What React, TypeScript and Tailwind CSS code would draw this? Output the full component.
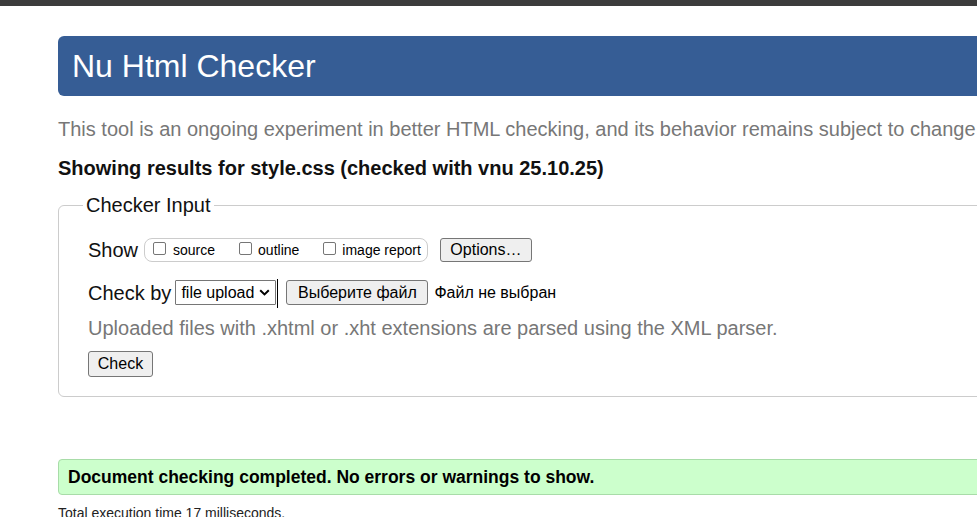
export default function App() {
  return (
    <div className="w-[977px] h-[517px] overflow-hidden bg-white font-['Liberation_Sans',Arial,sans-serif] text-[#111]">
      <div className="h-[6px] bg-[#3c3c3c]" />
      <div className="w-[1200px] pl-[58px]">
        {/* header */}
        <div className="mt-[30px] h-[60px] bg-[#365d95] rounded-[6px] flex items-center pl-[14px]">
          <h1 className="text-[32px] leading-[36px] text-white">Nu Html Checker</h1>
        </div>

        <p className="mt-[21px] text-[20px] leading-[24px] text-[#777] whitespace-nowrap">
          This tool is an ongoing experiment in better HTML checking, and its behavior remains subject to change
        </p>
        <p className="mt-[15px] text-[20px] leading-[24px] font-bold whitespace-nowrap">
          Showing results for style.css (checked with vnu 25.10.25)
        </p>

        {/* Checker Input */}
        <fieldset className="mt-[13px] border border-[#ccc] rounded-[6px] pl-[24px] pb-[19px]">
          <legend className="px-[3px] text-[20px] leading-[24px]">Checker Input</legend>
          <div className="ml-[5px]">
            <div className="mt-[20px] h-[26px] flex items-center">
              <span className="text-[20px] leading-[24px]">Show</span>
              <div className="ml-[6px] h-[24px] border border-[#ccc] rounded-[8px] pl-[8px] pr-[6px] flex items-center text-[14px] leading-[16px] text-black">
                <label className="flex items-end gap-[7px]">
                  <input type="checkbox" className="appearance-none m-0 mb-[3px] w-[13px] h-[13px] bg-white border border-[#767676] rounded-[2px]" />
                  <span>source</span>
                </label>
                <label className="ml-[24px] flex items-end gap-[6px]">
                  <input type="checkbox" className="appearance-none m-0 mb-[3px] w-[13px] h-[13px] bg-white border border-[#767676] rounded-[2px]" />
                  <span>outline</span>
                </label>
                <label className="ml-[24px] flex items-end gap-[6px]">
                  <input type="checkbox" className="appearance-none m-0 mb-[3px] w-[13px] h-[13px] bg-white border border-[#767676] rounded-[2px]" />
                  <span>image report</span>
                </label>
              </div>
              <button className="ml-[12px] w-[92px] h-[24px] bg-[#efefef] border border-[#767676] rounded-[3px] text-[16px] leading-[18px] text-black">
                Options…
              </button>
            </div>

            <div className="mt-[17px] h-[25px] flex items-center">
              <span className="text-[20px] leading-[24px]">Check by</span>
              <div className="relative ml-[4px] w-[101px] h-[25px]">
                <select className="appearance-none w-full h-full bg-white border border-[#767676] rounded-[1px] pl-[5px] text-[16px] leading-[18px] text-black outline-none">
                  <option>file upload</option>
                </select>
                <svg className="absolute right-[6px] top-[9px] pointer-events-none" width="11" height="7" viewBox="0 0 11 7">
                  <polyline points="1.2,1.2 5.5,5.4 9.8,1.2" fill="none" stroke="#000" strokeWidth="2" />
                </svg>
                <span className="absolute left-[102px] top-[-1px] w-[1px] h-[29px] bg-black" />
              </div>
              <button className="ml-[10px] w-[142px] h-[25px] bg-[#efefef] border border-[#767676] rounded-[3px] text-[16px] leading-[18px] text-black">
                Выберите файл
              </button>
              <span className="ml-[6px] text-[16px] leading-[18px] text-black">Файл не выбран</span>
            </div>

            <p className="mt-[11px] text-[20px] leading-[24px] text-[#777] whitespace-nowrap">
              Uploaded files with .xhtml or .xht extensions are parsed using the XML parser.
            </p>

            <button className="mt-[11px] w-[65px] h-[26px] bg-[#efefef] border border-[#767676] rounded-[3px] text-[16px] leading-[18px] text-black">
              Check
            </button>
          </div>
        </fieldset>

        {/* result */}
        <div className="mt-[62px] h-[36px] bg-[#ccffcc] border border-[#a8dca8] rounded-[4px] pl-[9px] flex items-center">
          <p className="text-[17.5px] leading-[22px] font-bold text-black whitespace-nowrap">
            Document checking completed. No errors or warnings to show.
          </p>
        </div>

        <p className="mt-[10px] text-[14px] leading-[16px] text-[#222]">Total execution time 17 milliseconds.</p>
      </div>
    </div>
  );
}
